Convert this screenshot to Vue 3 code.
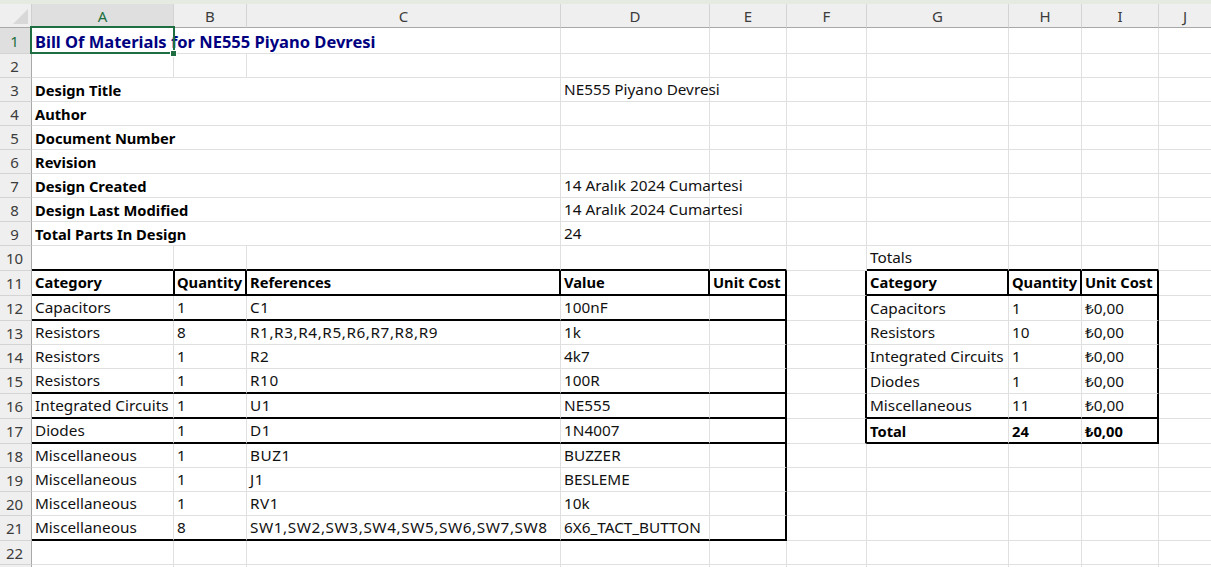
<template>
  <div class="sheet">
    <div class="top-strip"></div>
    <div class="grid">
      <div class="corner"><span class="corner-tri"></span></div>
      <div
        v-for="col in columns"
        :key="col"
        class="col-head"
        :class="{ active: col === 'A' }"
      >{{ col }}</div>

      <template v-for="row in rows" :key="row.num">
        <div class="row-head" :class="{ active: row.num === 1 }">{{ row.num < 23 ? row.num : '' }}</div>
        <div
          v-for="cell in row.cells"
          :key="cell.key"
          class="cell"
          :class="cell.classes"
          :style="cell.span > 1 ? { gridColumn: 'span ' + cell.span } : null"
        >{{ cell.text }}</div>
      </template>

      <div class="selection"><span class="handle"></span></div>
    </div>
  </div>
</template>

<script setup>
const columns = ['A', 'B', 'C', 'D', 'E', 'F', 'G', 'H', 'I', 'J']

// rows 1-9: merged label over A:C, value in D
const info = {
  3: ['Design Title', 'NE555 Piyano Devresi'],
  4: ['Author', ''],
  5: ['Document Number', ''],
  6: ['Revision', ''],
  7: ['Design Created', '14 Aralık 2024 Cumartesi'],
  8: ['Design Last Modified', '14 Aralık 2024 Cumartesi'],
  9: ['Total Parts In Design', '24']
}

const bom = {
  11: ['Category', 'Quantity', 'References', 'Value', 'Unit Cost'],
  12: ['Capacitors', '1', 'C1', '100nF', ''],
  13: ['Resistors', '8', 'R1,R3,R4,R5,R6,R7,R8,R9', '1k', ''],
  14: ['Resistors', '1', 'R2', '4k7', ''],
  15: ['Resistors', '1', 'R10', '100R', ''],
  16: ['Integrated Circuits', '1', 'U1', 'NE555', ''],
  17: ['Diodes', '1', 'D1', '1N4007', ''],
  18: ['Miscellaneous', '1', 'BUZ1', 'BUZZER', ''],
  19: ['Miscellaneous', '1', 'J1', 'BESLEME', ''],
  20: ['Miscellaneous', '1', 'RV1', '10k', ''],
  21: ['Miscellaneous', '8', 'SW1,SW2,SW3,SW4,SW5,SW6,SW7,SW8', '6X6_TACT_BUTTON', '']
}

const totals = {
  10: ['Totals', '', ''],
  11: ['Category', 'Quantity', 'Unit Cost'],
  12: ['Capacitors', '1', '₺0,00'],
  13: ['Resistors', '10', '₺0,00'],
  14: ['Integrated Circuits', '1', '₺0,00'],
  15: ['Diodes', '1', '₺0,00'],
  16: ['Miscellaneous', '11', '₺0,00'],
  17: ['Total', '24', '₺0,00']
}

// rows with a thick line under them
const bomBreaks = [10, 11, 12, 15, 16, 17, 21]
const totalBreaks = [10, 11, 16, 17]

function plainCells(num, from, values, extra) {
  return values.map((text, i) => ({
    key: num + '-' + (from + i),
    text,
    span: 1,
    classes: extra ? extra(from + i) : []
  }))
}

function buildRow(num) {
  if (num === 1) {
    return [
      { key: '1-a', text: 'Bill Of Materials for NE555 Piyano Devresi', span: 3, classes: ['title'] },
      ...plainCells(num, 3, ['', '', '', '', '', '', ''])
    ]
  }
  if (info[num]) {
    return [
      { key: num + '-a', text: info[num][0], span: 3, classes: ['bold'] },
      ...plainCells(num, 3, [info[num][1], '', '', '', '', '', ''])
    ]
  }

  const left = bom[num] || ['', '', '', '', '']
  const right = totals[num] || ['', '', '']
  const inBom = num >= 11 && num <= 21
  const inTotals = num >= 11 && num <= 17

  const bomCells = plainCells(num, 0, left, (col) => {
    const list = []
    if (num === 11) list.push('bold', 'head')
    if (num > 11 && col === 2) list.push('refs')
    if (bomBreaks.includes(num)) list.push('thick-b')
    if (inBom && col === 4) list.push('thick-r')
    if (num === 11 && col === 0) list.push('thick-r-out')
    if (num === 11 && col > 0 && col < 4) list.push('thick-r')
    return list
  })
  const gapCell = plainCells(num, 5, [''], () => (inTotals ? ['thick-r'] : []))
  const totalCells = plainCells(num, 6, right, (col) => {
    const list = []
    if (num === 11) list.push('head')
    if (num === 11 || num === 17) list.push('bold')
    if (totalBreaks.includes(num)) list.push('thick-b')
    if (inTotals && col === 8) list.push('thick-r')
    if (num === 11 && col < 8) list.push('thick-r')
    return list
  })
  const lastCell = plainCells(num, 9, [''])
  return [...bomCells, ...gapCell, ...totalCells, ...lastCell]
}

const rows = Array.from({ length: 23 }, (_, i) => ({
  num: i + 1,
  cells: buildRow(i + 1)
}))
</script>

<style>
html,
body {
  margin: 0;
  background: #fff;
  overflow: hidden;
}
</style>

<style scoped>
.sheet {
  width: 1211px;
  height: 567px;
  overflow: hidden;
  background: #fff;
  font-family: "Noto Sans", "Liberation Sans", sans-serif;
  font-size: 15.3px;
  color: #111;
}

.top-strip {
  height: 4px;
  background: #e6ebe2;
}

.grid {
  position: relative;
  display: grid;
  grid-template-columns: 32px 142px 73px 314px 149px 77px 80px 142px 73px 77px 53px;
  grid-template-rows: 24px 26px repeat(8, 24px) 25px 25px 25px 24px 24px 25px 25px 25px 24px 24px 24px 25px 24px 24px;
}

.corner {
  background: #efefef;
  border-right: 1px solid #d0d0d0;
  border-bottom: 1px solid #a8a8a8;
  box-sizing: border-box;
  position: relative;
}

.corner-tri {
  position: absolute;
  right: 3px;
  bottom: 3px;
  width: 0;
  height: 0;
  border-left: 15px solid transparent;
  border-bottom: 15px solid #d8d8d8;
}

.col-head {
  background: #efefef;
  border-right: 1px solid #d4d4d4;
  border-bottom: 1px solid #a8a8a8;
  box-sizing: border-box;
  color: #3c3c3c;
  display: flex;
  align-items: center;
  justify-content: center;
  font-size: 15px;
}

.col-head.active {
  background: #dfdfdf;
  color: #1e6e42;
}

.row-head {
  background: #efefef;
  border-right: 1px solid #a8a8a8;
  border-bottom: 1px solid #d4d4d4;
  box-sizing: border-box;
  color: #3c3c3c;
  display: flex;
  align-items: center;
  justify-content: center;
  font-size: 15px;
  padding-right: 2px;
}

.row-head.active {
  background: #dfdfdf;
  color: #1e6e42;
}

.cell {
  border-right: 1px solid #e0e0e0;
  border-bottom: 1px solid #e0e0e0;
  box-sizing: border-box;
  display: flex;
  align-items: flex-end;
  padding: 0 3px 2px;
  white-space: nowrap;
  line-height: 20px;
  min-width: 0;
}

.bold {
  font-weight: 700;
  font-size: 14.7px;
  color: #000;
  padding-bottom: 1px;
}

.head {
  padding-bottom: 2px;
}

.refs {
  letter-spacing: 0.58px;
}

.title {
  font-weight: 700;
  font-size: 16.5px;
  color: #000080;
  padding-bottom: 1px;
}

.thick-b {
  border-bottom: 2px solid #000;
}

.thick-r {
  border-right: 2px solid #000;
}

.thick-r-out {
  border-right: 1px solid #000;
  box-shadow: 1px 0 0 #000;
}

.selection {
  position: absolute;
  left: 30px;
  top: 22px;
  width: 145px;
  height: 28px;
  box-sizing: border-box;
  border: 2px solid #1e6e42;
  pointer-events: none;
}

.handle {
  position: absolute;
  right: -4px;
  bottom: -5px;
  width: 5px;
  height: 5px;
  background: #1e6e42;
  border: 1px solid #fff;
}
</style>
